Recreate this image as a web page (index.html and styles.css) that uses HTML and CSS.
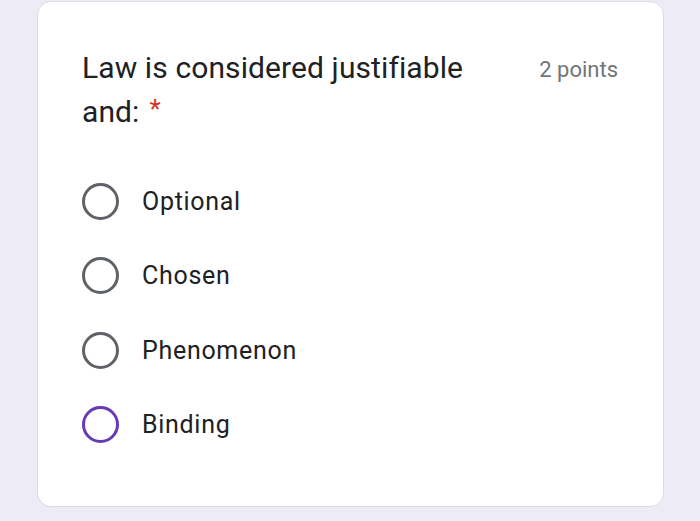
FILE: index.html
```html
<!DOCTYPE html>
<html lang="en">
<head>
    <meta charset="UTF-8">
    <title>Question</title>
    <link rel="stylesheet" href="styles.css">
</head>
<body>
    <div class="card">
        <div class="head">
            <div class="title">Law is considered justifiable and:<span class="req">*</span></div>
            <div class="points">2 points</div>
        </div>
        <ul class="options">
            <li><span class="radio"></span>Optional</li>
            <li><span class="radio"></span>Chosen</li>
            <li><span class="radio"></span>Phenomenon</li>
            <li><span class="radio active"></span>Binding</li>
        </ul>
    </div>
</body>
</html>
```

FILE: styles.css
```css
* { box-sizing: border-box }
body {
    margin: 0;
    padding-top: 1px;
    background: #edebf6;
    font-family: Roboto, "Liberation Sans", sans-serif;
    color: #202124;
}
.card {
    width: 627px;
    height: 506px;
    margin-left: 37px;
    background: #fff;
    border: 1px solid #dcdbe4;
    border-radius: 14px;
    padding: 44px 44px 0 44px;
}
.head { display: flex; justify-content: space-between; }
.title { width: 400px; font-size: 30px; line-height: 44px; letter-spacing: 0.1px; }
.req { display: inline-block; color: #d93025; font-size: 26px; line-height: 30px; margin-left: 10px; vertical-align: top; padding-top: 4px; }
.points { font-size: 22px; color: #70757a; padding-top: 11px; padding-right: 1px; }
.options { list-style: none; margin: 30px 0 0 0; padding: 0; }
.options li { display: flex; align-items: center; height: 74.5px; font-size: 25px; letter-spacing: 0.7px; }
.radio {
    width: 37px;
    height: 37px;
    border: 3px solid #5f6368;
    border-radius: 50%;
    margin-right: 23px;
}
.radio.active { border-color: #673ab7; }
```
